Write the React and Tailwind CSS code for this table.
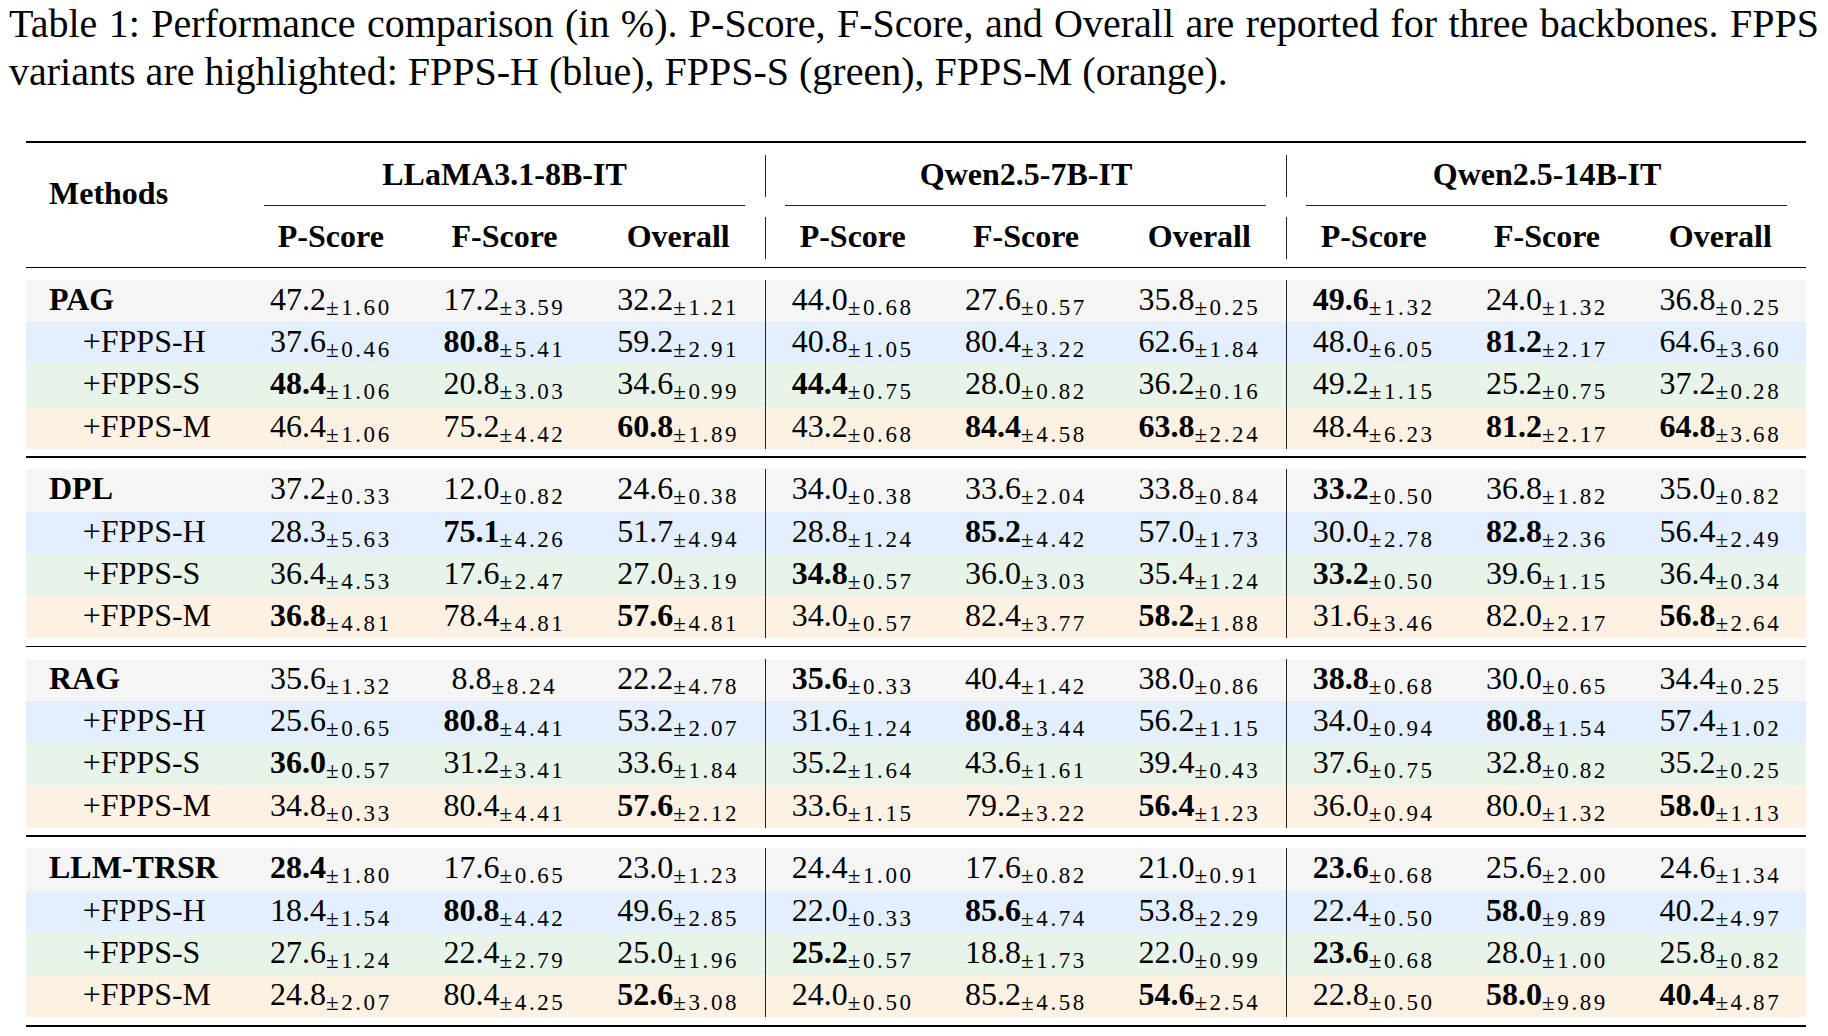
import React from "react";

const DATA = [
  {
    name: "PAG",
    rows: [
      ["47.2|1.60", "17.2|3.59", "32.2|1.21", "44.0|0.68", "27.6|0.57", "35.8|0.25", "*49.6|1.32", "24.0|1.32", "36.8|0.25"],
      ["37.6|0.46", "*80.8|5.41", "59.2|2.91", "40.8|1.05", "80.4|3.22", "62.6|1.84", "48.0|6.05", "*81.2|2.17", "64.6|3.60"],
      ["*48.4|1.06", "20.8|3.03", "34.6|0.99", "*44.4|0.75", "28.0|0.82", "36.2|0.16", "49.2|1.15", "25.2|0.75", "37.2|0.28"],
      ["46.4|1.06", "75.2|4.42", "*60.8|1.89", "43.2|0.68", "*84.4|4.58", "*63.8|2.24", "48.4|6.23", "*81.2|2.17", "*64.8|3.68"],
    ],
  },
  {
    name: "DPL",
    rows: [
      ["37.2|0.33", "12.0|0.82", "24.6|0.38", "34.0|0.38", "33.6|2.04", "33.8|0.84", "*33.2|0.50", "36.8|1.82", "35.0|0.82"],
      ["28.3|5.63", "*75.1|4.26", "51.7|4.94", "28.8|1.24", "*85.2|4.42", "57.0|1.73", "30.0|2.78", "*82.8|2.36", "56.4|2.49"],
      ["36.4|4.53", "17.6|2.47", "27.0|3.19", "*34.8|0.57", "36.0|3.03", "35.4|1.24", "*33.2|0.50", "39.6|1.15", "36.4|0.34"],
      ["*36.8|4.81", "78.4|4.81", "*57.6|4.81", "34.0|0.57", "82.4|3.77", "*58.2|1.88", "31.6|3.46", "82.0|2.17", "*56.8|2.64"],
    ],
  },
  {
    name: "RAG",
    rows: [
      ["35.6|1.32", "8.8|8.24", "22.2|4.78", "*35.6|0.33", "40.4|1.42", "38.0|0.86", "*38.8|0.68", "30.0|0.65", "34.4|0.25"],
      ["25.6|0.65", "*80.8|4.41", "53.2|2.07", "31.6|1.24", "*80.8|3.44", "56.2|1.15", "34.0|0.94", "*80.8|1.54", "57.4|1.02"],
      ["*36.0|0.57", "31.2|3.41", "33.6|1.84", "35.2|1.64", "43.6|1.61", "39.4|0.43", "37.6|0.75", "32.8|0.82", "35.2|0.25"],
      ["34.8|0.33", "80.4|4.41", "*57.6|2.12", "33.6|1.15", "79.2|3.22", "*56.4|1.23", "36.0|0.94", "80.0|1.32", "*58.0|1.13"],
    ],
  },
  {
    name: "LLM-TRSR",
    rows: [
      ["*28.4|1.80", "17.6|0.65", "23.0|1.23", "24.4|1.00", "17.6|0.82", "21.0|0.91", "*23.6|0.68", "25.6|2.00", "24.6|1.34"],
      ["18.4|1.54", "*80.8|4.42", "49.6|2.85", "22.0|0.33", "*85.6|4.74", "53.8|2.29", "22.4|0.50", "*58.0|9.89", "40.2|4.97"],
      ["27.6|1.24", "22.4|2.79", "25.0|1.96", "*25.2|0.57", "18.8|1.73", "22.0|0.99", "*23.6|0.68", "28.0|1.00", "25.8|0.82"],
      ["24.8|2.07", "80.4|4.25", "*52.6|3.08", "24.0|0.50", "85.2|4.58", "*54.6|2.54", "22.8|0.50", "*58.0|9.89", "*40.4|4.87"],
    ],
  },
];

const ROW_BG = ["bg-[#f5f5f5]", "bg-[#e3effc]", "bg-[#e8f4ea]", "bg-[#fdf1e3]"];
const VARIANTS = ["+FPPS-H", "+FPPS-S", "+FPPS-M"];
const GROUPS = ["LLaMA3.1-8B-IT", "Qwen2.5-7B-IT", "Qwen2.5-14B-IT"];
const SUBS = ["P-Score", "F-Score", "Overall"];

function Cell({ value }) {
  const bold = value.startsWith("*");
  const [v, sd] = value.replace("*", "").split("|");
  return (
    <div className="flex-1 text-center whitespace-nowrap leading-[38px]">
      <span className={bold ? "font-bold" : ""}>{v}</span>
      <span className="text-[23px] tracking-[2.6px] leading-none align-[-4.5px]">±{sd}</span>
    </div>
  );
}

function BodyRow({ label, isBase, cells, bg }) {
  return (
    <div className={`flex h-[42.3px] ${bg}`}>
      <div
        className={`w-[218px] shrink-0 leading-[38px] whitespace-nowrap ${
          isBase ? "pl-[23px] font-bold" : "pl-[56.7px]"
        }`}
      >
        {label}
      </div>
      {[0, 1, 2].map((g) => (
        <div
          key={g}
          className={`flex w-[521px] shrink-0 ${g > 0 ? "border-l border-[#222]" : ""}`}
        >
          {cells.slice(g * 3, g * 3 + 3).map((c, i) => (
            <Cell key={i} value={c} />
          ))}
        </div>
      ))}
    </div>
  );
}

export default function App() {
  return (
    <div className="w-[1828px] h-[1036px] overflow-hidden bg-white text-black font-['Liberation_Serif','Times_New_Roman',serif]">
      {/* Caption */}
      <div className="px-[9px] text-[40px] leading-[48px]">
        <div className="[text-align-last:justify]">
          Table 1: Performance comparison (in %). P-Score, F-Score, and Overall are reported for three backbones. FPPS
        </div>
        <div>variants are highlighted: FPPS-H (blue), FPPS-S (green), FPPS-M (orange).</div>
      </div>

      {/* Table */}
      <div className="mt-[45px] ml-[26px] w-[1780px] text-[32px]">
        <div className="h-[2px] bg-black" />

        {/* Header */}
        <div className="flex h-[124px]">
          <div className="w-[218px] shrink-0 pl-[23px] pt-[31px] font-bold leading-[38px]">Methods</div>
          {GROUPS.map((name, g) => (
            <div key={name} className="flex w-[521px] shrink-0 flex-col">
              <div className="h-[12px]" />
              <div
                className={`h-[42.3px] text-center font-bold leading-[38px] ${
                  g > 0 ? "border-l border-[#222]" : ""
                }`}
              >
                {name}
              </div>
              <div className="h-[7.7px]" />
              <div className="mx-[20px] h-px bg-[#222]" />
              <div className="h-[11px]" />
              <div className={`flex h-[42.3px] ${g > 0 ? "border-l border-[#222]" : ""}`}>
                {SUBS.map((s) => (
                  <div key={s} className="flex-1 text-center font-bold leading-[38px]">
                    {s}
                  </div>
                ))}
              </div>
            </div>
          ))}
        </div>
        <div className="h-[1.3px] bg-black" />

        {/* Body groups */}
        {DATA.map((grp, gi) => (
          <div key={grp.name}>
            <div className="h-[11.5px]" />
            {grp.rows.map((cells, ri) => (
              <BodyRow
                key={ri}
                label={ri === 0 ? grp.name : VARIANTS[ri - 1]}
                isBase={ri === 0}
                cells={cells}
                bg={ROW_BG[ri]}
              />
            ))}
            <div className="h-[7.5px]" />
            {gi < DATA.length - 1 ? (
              <div className="h-[1.3px] bg-black" />
            ) : (
              <div className="h-[2px] bg-black" />
            )}
          </div>
        ))}
      </div>
    </div>
  );
}
